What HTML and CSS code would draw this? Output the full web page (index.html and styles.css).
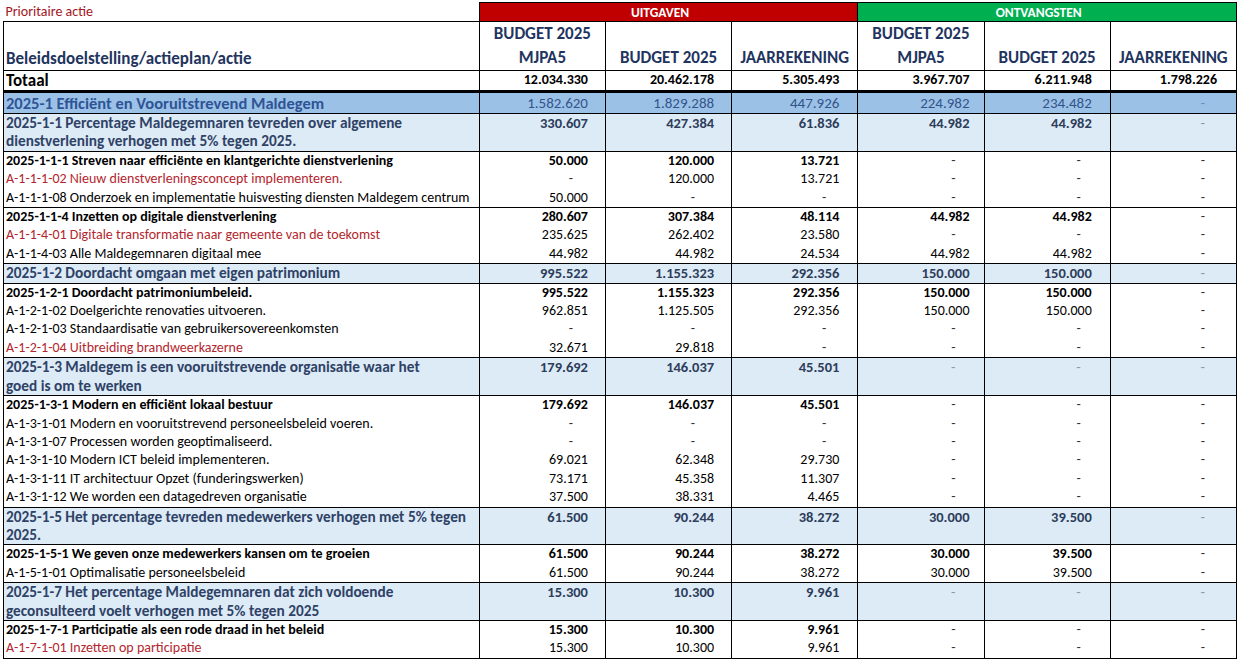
FILE: index.html
```html
<!DOCTYPE html>
<html lang="nl">
<head>
<meta charset="utf-8">
<title>Beleidsdoelstellingen</title>
<link rel="stylesheet" href="styles.css">
</head>
<body>
<table class="sheet">
  <colgroup>
    <col class="c-label"><col class="c-num"><col class="c-num"><col class="c-num"><col class="c-num"><col class="c-num"><col class="c-num">
  </colgroup>
  <thead>
    <tr class="band">
      <th class="legend">Prioritaire actie</th>
      <th colspan="3" class="out">UITGAVEN</th>
      <th colspan="3" class="in">ONTVANGSTEN</th>
    </tr>
    <tr class="heads">
      <th class="title">Beleidsdoelstelling/actieplan/actie</th>
      <th>BUDGET 2025<br>MJPA5</th>
      <th>BUDGET 2025</th>
      <th>JAARREKENING</th>
      <th>BUDGET 2025<br>MJPA5</th>
      <th>BUDGET 2025</th>
      <th>JAARREKENING</th>
    </tr>
    <tr class="total">
      <th class="title">Totaal</th>
      <td>12.034.330</td><td>20.462.178</td><td>5.305.493</td><td>3.967.707</td><td>6.211.948</td><td>1.798.226</td>
    </tr>
  </thead>
  <tbody>
    <tr class="lvl1">
      <td class="label">2025-1 Efficiënt en Vooruitstrevend Maldegem</td>
      <td>1.582.620</td><td>1.829.288</td><td>447.926</td><td>224.982</td><td>234.482</td><td class="dash">-</td>
    </tr>
    <tr class="lvl2">
      <td class="label">2025-1-1 Percentage Maldegemnaren tevreden over algemene<br>dienstverlening verhogen met 5% tegen 2025.</td>
      <td>330.607</td><td>427.384</td><td>61.836</td><td>44.982</td><td>44.982</td><td class="dash">-</td>
    </tr>
    <tr class="plan first">
      <td class="label">2025-1-1-1 Streven naar efficiënte en klantgerichte dienstverlening</td>
      <td>50.000</td><td>120.000</td><td>13.721</td><td class="dash">-</td><td class="dash">-</td><td class="dash">-</td>
    </tr>
    <tr class="act prio">
      <td class="label">A-1-1-1-02 Nieuw dienstverleningsconcept implementeren.</td>
      <td class="dash">-</td><td>120.000</td><td>13.721</td><td class="dash">-</td><td class="dash">-</td><td class="dash">-</td>
    </tr>
    <tr class="act">
      <td class="label">A-1-1-1-08 Onderzoek en implementatie huisvesting diensten Maldegem centrum</td>
      <td>50.000</td><td class="dash">-</td><td class="dash">-</td><td class="dash">-</td><td class="dash">-</td><td class="dash">-</td>
    </tr>
    <tr class="plan first">
      <td class="label">2025-1-1-4 Inzetten op digitale dienstverlening</td>
      <td>280.607</td><td>307.384</td><td>48.114</td><td>44.982</td><td>44.982</td><td class="dash">-</td>
    </tr>
    <tr class="act prio">
      <td class="label">A-1-1-4-01 Digitale transformatie naar gemeente van de toekomst</td>
      <td>235.625</td><td>262.402</td><td>23.580</td><td class="dash">-</td><td class="dash">-</td><td class="dash">-</td>
    </tr>
    <tr class="act">
      <td class="label">A-1-1-4-03 Alle Maldegemnaren digitaal mee</td>
      <td>44.982</td><td>44.982</td><td>24.534</td><td>44.982</td><td>44.982</td><td class="dash">-</td>
    </tr>
    <tr class="lvl2">
      <td class="label">2025-1-2 Doordacht omgaan met eigen patrimonium</td>
      <td>995.522</td><td>1.155.323</td><td>292.356</td><td>150.000</td><td>150.000</td><td class="dash">-</td>
    </tr>
    <tr class="plan first">
      <td class="label">2025-1-2-1 Doordacht patrimoniumbeleid.</td>
      <td>995.522</td><td>1.155.323</td><td>292.356</td><td>150.000</td><td>150.000</td><td class="dash">-</td>
    </tr>
    <tr class="act">
      <td class="label">A-1-2-1-02 Doelgerichte renovaties uitvoeren.</td>
      <td>962.851</td><td>1.125.505</td><td>292.356</td><td>150.000</td><td>150.000</td><td class="dash">-</td>
    </tr>
    <tr class="act">
      <td class="label">A-1-2-1-03 Standaardisatie van gebruikersovereenkomsten</td>
      <td class="dash">-</td><td class="dash">-</td><td class="dash">-</td><td class="dash">-</td><td class="dash">-</td><td class="dash">-</td>
    </tr>
    <tr class="act prio">
      <td class="label">A-1-2-1-04 Uitbreiding brandweerkazerne</td>
      <td>32.671</td><td>29.818</td><td class="dash">-</td><td class="dash">-</td><td class="dash">-</td><td class="dash">-</td>
    </tr>
    <tr class="lvl2">
      <td class="label">2025-1-3 Maldegem is een vooruitstrevende organisatie waar het<br>goed is om te werken</td>
      <td>179.692</td><td>146.037</td><td>45.501</td><td class="dash">-</td><td class="dash">-</td><td class="dash">-</td>
    </tr>
    <tr class="plan first">
      <td class="label">2025-1-3-1 Modern en efficiënt lokaal bestuur</td>
      <td>179.692</td><td>146.037</td><td>45.501</td><td class="dash">-</td><td class="dash">-</td><td class="dash">-</td>
    </tr>
    <tr class="act">
      <td class="label">A-1-3-1-01 Modern en vooruitstrevend personeelsbeleid voeren.</td>
      <td class="dash">-</td><td class="dash">-</td><td class="dash">-</td><td class="dash">-</td><td class="dash">-</td><td class="dash">-</td>
    </tr>
    <tr class="act">
      <td class="label">A-1-3-1-07 Processen worden geoptimaliseerd.</td>
      <td class="dash">-</td><td class="dash">-</td><td class="dash">-</td><td class="dash">-</td><td class="dash">-</td><td class="dash">-</td>
    </tr>
    <tr class="act">
      <td class="label">A-1-3-1-10 Modern ICT beleid implementeren.</td>
      <td>69.021</td><td>62.348</td><td>29.730</td><td class="dash">-</td><td class="dash">-</td><td class="dash">-</td>
    </tr>
    <tr class="act">
      <td class="label">A-1-3-1-11 IT architectuur Opzet (funderingswerken)</td>
      <td>73.171</td><td>45.358</td><td>11.307</td><td class="dash">-</td><td class="dash">-</td><td class="dash">-</td>
    </tr>
    <tr class="act">
      <td class="label">A-1-3-1-12 We worden een datagedreven organisatie</td>
      <td>37.500</td><td>38.331</td><td>4.465</td><td class="dash">-</td><td class="dash">-</td><td class="dash">-</td>
    </tr>
    <tr class="lvl2">
      <td class="label">2025-1-5 Het percentage tevreden medewerkers verhogen met 5% tegen<br>2025.</td>
      <td>61.500</td><td>90.244</td><td>38.272</td><td>30.000</td><td>39.500</td><td class="dash">-</td>
    </tr>
    <tr class="plan first">
      <td class="label">2025-1-5-1 We geven onze medewerkers kansen om te groeien</td>
      <td>61.500</td><td>90.244</td><td>38.272</td><td>30.000</td><td>39.500</td><td class="dash">-</td>
    </tr>
    <tr class="act">
      <td class="label">A-1-5-1-01 Optimalisatie personeelsbeleid</td>
      <td>61.500</td><td>90.244</td><td>38.272</td><td>30.000</td><td>39.500</td><td class="dash">-</td>
    </tr>
    <tr class="lvl2">
      <td class="label">2025-1-7 Het percentage Maldegemnaren dat zich voldoende<br>geconsulteerd voelt verhogen met 5% tegen 2025</td>
      <td>15.300</td><td>10.300</td><td>9.961</td><td class="dash">-</td><td class="dash">-</td><td class="dash">-</td>
    </tr>
    <tr class="plan first">
      <td class="label">2025-1-7-1 Participatie als een rode draad in het beleid</td>
      <td>15.300</td><td>10.300</td><td>9.961</td><td class="dash">-</td><td class="dash">-</td><td class="dash">-</td>
    </tr>
    <tr class="act prio">
      <td class="label">A-1-7-1-01 Inzetten op participatie</td>
      <td>15.300</td><td>10.300</td><td>9.961</td><td class="dash">-</td><td class="dash">-</td><td class="dash">-</td>
    </tr>
    <tr class="act first tail">
      <td class="label"></td><td></td><td></td><td></td><td></td><td></td><td></td>
    </tr>
  </tbody>
</table>
</body>
</html>
```

FILE: styles.css
```css
html, body {
  margin: 0;
  padding: 0;
  background: #ffffff;
}

body {
  font-family: Carlito, Lato, "Liberation Sans", sans-serif;
  color: #000000;
  overflow: hidden;
}

.sheet {
  margin: 2px 0 0 3px;
  border-collapse: collapse;
  table-layout: fixed;
  width: 1234px;
}

.c-label { width: 475px; }
.c-num { width: 126px; }

.sheet th,
.sheet td {
  padding: 0;
  border-left: 1px solid #000;
  border-right: 1px solid #000;
  white-space: nowrap;
  overflow: hidden;
}

/* top band */
.band th {
  height: 18px;
  font-size: 13.5px;
  font-weight: bold;
  color: #ffffff;
  text-align: center;
  vertical-align: middle;
  border-top: 1px solid #000;
}
.band .legend {
  border: none;
  border-right: 1px solid #000;
  text-align: left;
  font-weight: normal;
  font-size: 14px;
  color: #a3161e;
  padding-left: 2px;
  vertical-align: middle;
  line-height: 16px;
}
.band .out { background: #c00000; }
.band .in { background: #00b050; }

/* column heads */
.heads th {
  height: 43px;
  border-top: 1px solid #000;
  font-size: 17px;
  font-weight: bold;
  line-height: 24px;
  color: #1f3560;
  text-align: center;
  vertical-align: bottom;
}
.heads .title {
  text-align: left;
  padding-left: 2px;
  line-height: 20px;
  padding-bottom: 1px;
}

/* total */
.total th,
.total td {
  height: 19px;
  border-top: 1px solid #000;
  border-bottom: 3px solid #000;
  font-weight: bold;
  font-size: 14.5px;
  vertical-align: middle;
}
.total .title {
  text-align: left;
  padding-left: 2px;
  font-size: 17px;
  vertical-align: top;
  line-height: 19px;
}

/* numbers */
.sheet td {
  text-align: right;
  vertical-align: top;
  font-size: 14px;
  line-height: 18.4px;
}
.sheet tr > *:nth-child(2) { padding-right: 17px; }
.sheet tr > *:nth-child(3) { padding-right: 17px; }
.sheet tr > *:nth-child(4) { padding-right: 18px; }
.sheet tr > *:nth-child(5) { padding-right: 14px; }
.sheet tr > *:nth-child(6) { padding-right: 18px; }
.sheet tr > *:nth-child(7) { padding-right: 19px; }
.heads th:nth-child(n) { padding-right: 0; }
.sheet td.dash:nth-child(2) { padding-right: 32px; }
.sheet td.dash:nth-child(3) { padding-right: 36px; }
.sheet td.dash:nth-child(4) { padding-right: 31px; }
.sheet td.dash:nth-child(5) { padding-right: 28px; }
.sheet td.dash:nth-child(6) { padding-right: 29px; }
.sheet td.dash:nth-child(7) { padding-right: 31px; }

.sheet td.label {
  text-align: left;
  padding-left: 2px;
  padding-right: 0;
  font-size: 14px;
}

/* level 1 */
.lvl1 td {
  background: #9bc2e6;
  color: #34538c;
  line-height: 20px;
  font-size: 15px;
  border-bottom: 1px solid #000;
}
.lvl1 td.label {
  font-size: 16.5px;
  font-weight: bold;
  color: #2f5496;
}
.lvl1 td.dash { color: #6d8cbf; }

/* level 2 */
.lvl2 td {
  background: #ddebf7;
  color: #2d3d5a;
  font-weight: bold;
  font-size: 14.5px;
  border-top: 1px solid #000;
  border-bottom: 1px solid #000;
}
.lvl2 td.label {
  font-size: 15.3px;
  color: #2f4266;
}
.lvl2 td.dash {
  color: #8a9ab0;
  font-weight: normal;
}

/* plan + actions */
.first td { border-top: 1px solid #000; }
.plan td { font-weight: bold; font-size: 14px; }
.plan td.label { font-size: 14px; }
.plan td.dash,
.act td.dash { font-weight: normal; color: #333; }
.act.prio td.label { color: #b3262e; }
.tail td { height: 10px; }
```
